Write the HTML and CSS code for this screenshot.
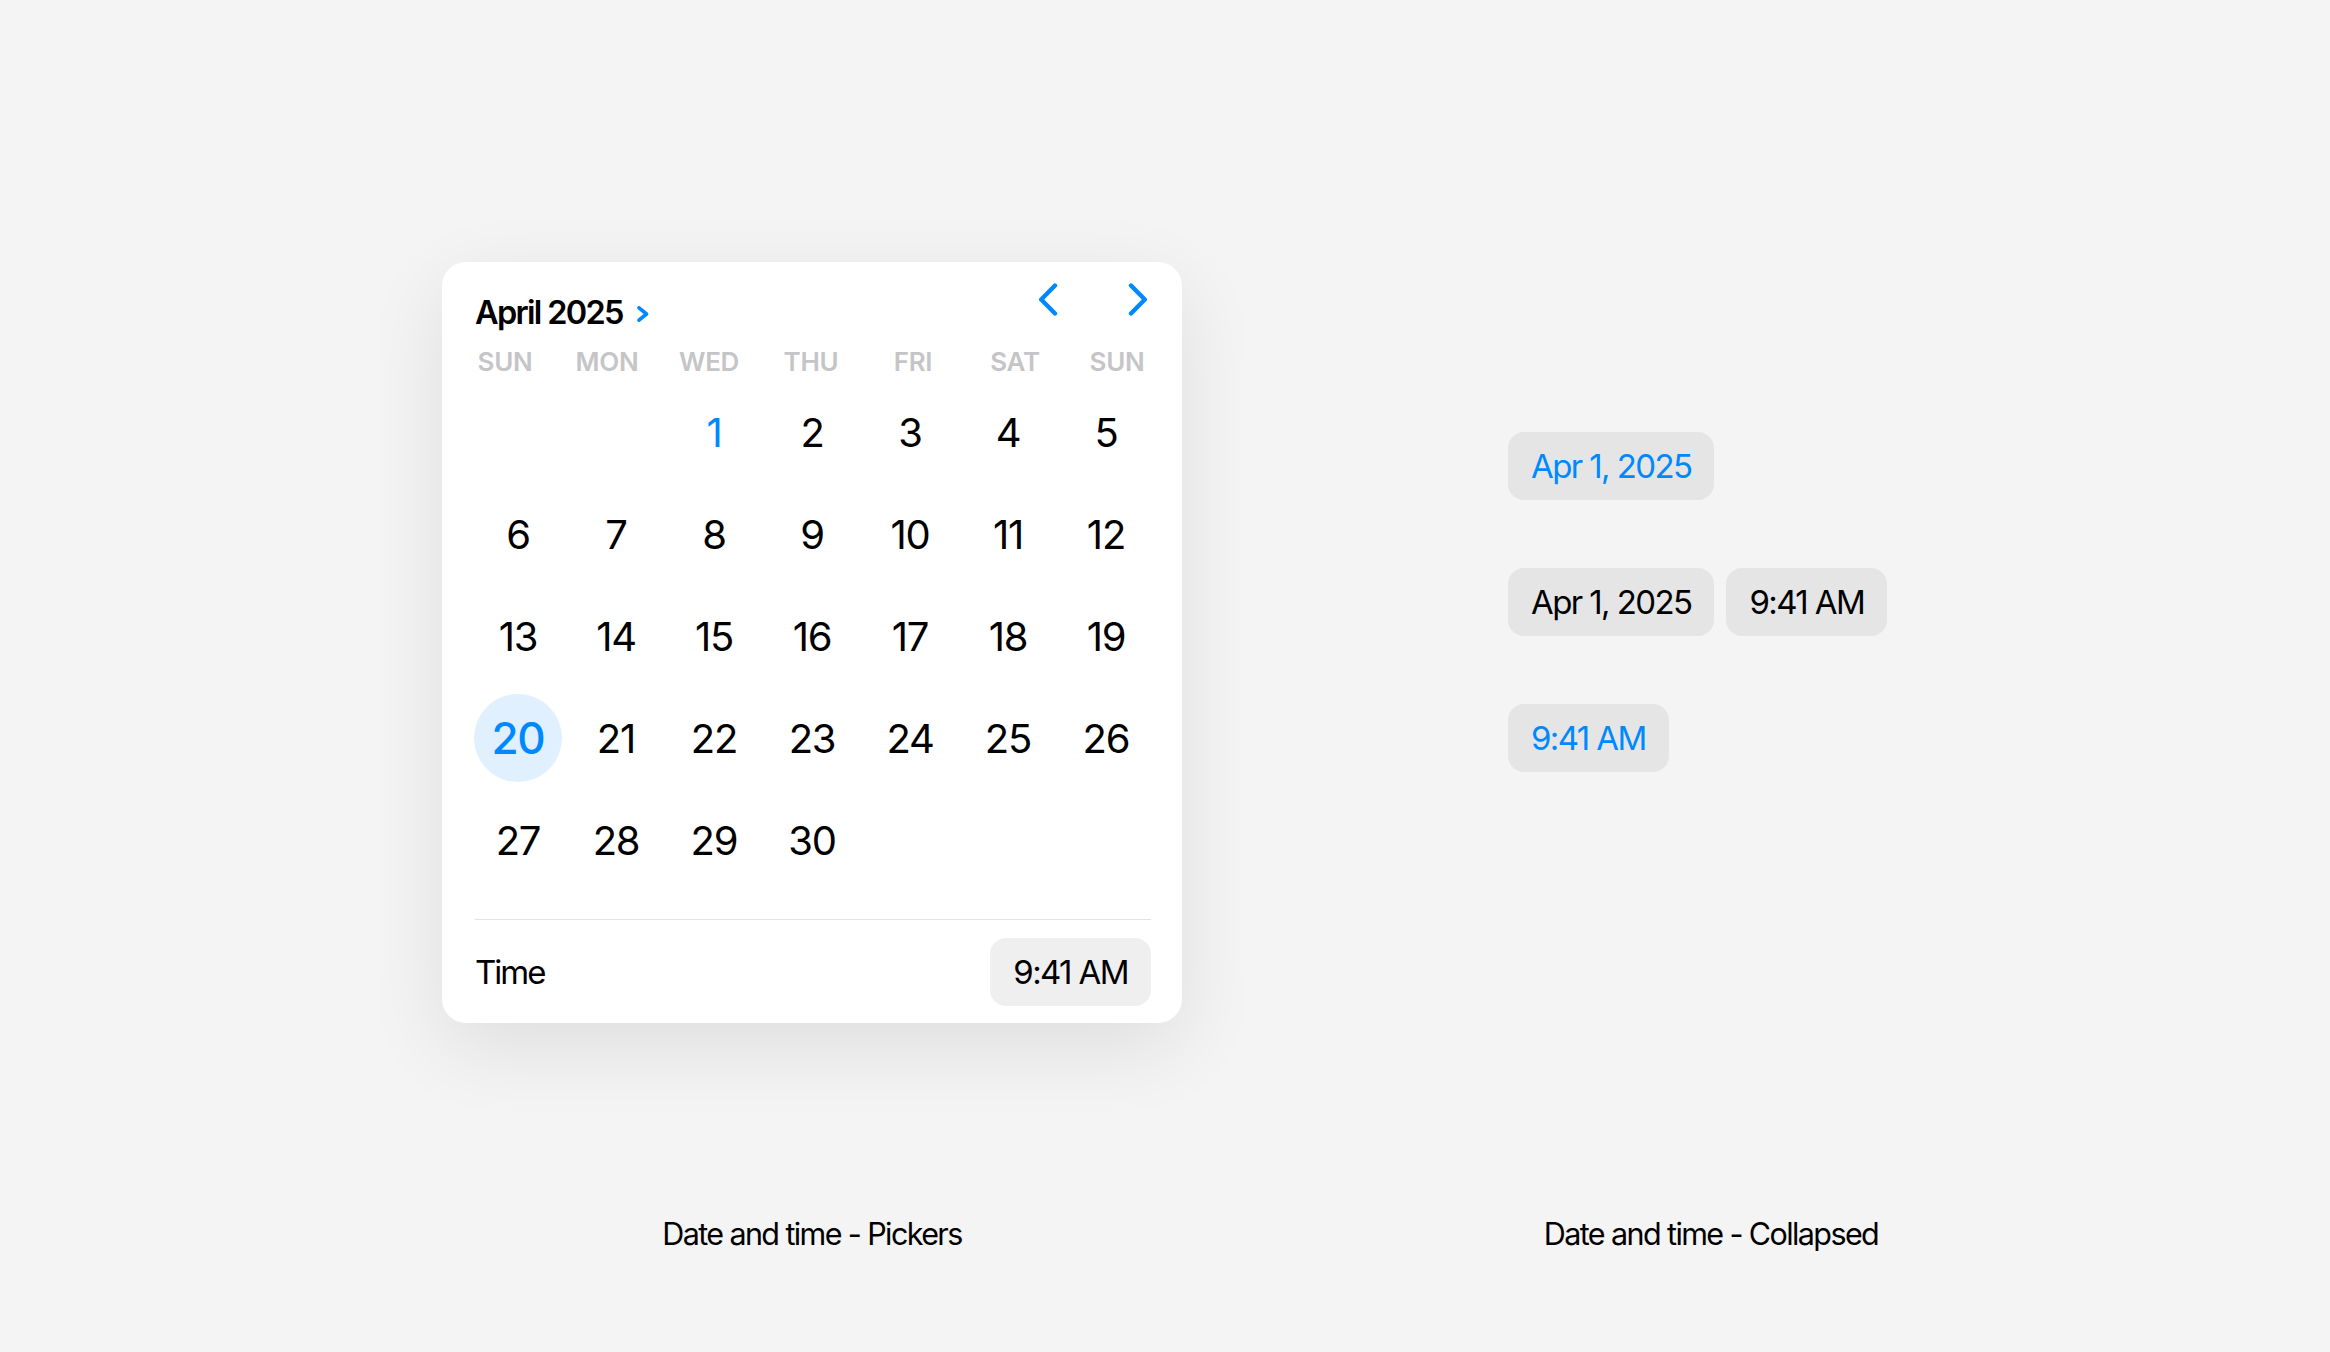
FILE: index.html
```html
<!DOCTYPE html>
<html lang="en">
<head>
<meta charset="utf-8">
<title>Date and time</title>
<link rel="stylesheet" href="styles.css">
</head>
<body>
<main class="stage">
  <section class="col col-pickers">
    <div class="card">
      <div class="cal-head">
        <div class="month">
          <span>April 2025</span>
          <svg class="month-chev" viewBox="0 0 14 16" aria-hidden="true"><path d="M3 1.8 L10.5 8 L3 14.2"/></svg>
        </div>
        <div class="nav">
          <svg viewBox="0 0 20 33" aria-hidden="true"><path d="M17 2.5 L3.2 16.5 L17 30.5"/></svg>
          <svg viewBox="0 0 20 33" aria-hidden="true"><path d="M3 2.5 L16.8 16.5 L3 30.5"/></svg>
        </div>
      </div>
      <div class="weekdays">
        <span>SUN</span><span>MON</span><span>WED</span><span>THU</span><span>FRI</span><span>SAT</span><span>SUN</span>
      </div>
      <div class="days">
        <span class="day"></span><span class="day"></span>
        <span class="day today">1</span><span class="day">2</span><span class="day">3</span><span class="day">4</span><span class="day">5</span>
        <span class="day">6</span><span class="day">7</span><span class="day">8</span><span class="day">9</span><span class="day">10</span><span class="day">11</span><span class="day">12</span>
        <span class="day">13</span><span class="day">14</span><span class="day">15</span><span class="day">16</span><span class="day">17</span><span class="day">18</span><span class="day">19</span>
        <span class="day selected">20</span><span class="day">21</span><span class="day">22</span><span class="day">23</span><span class="day">24</span><span class="day">25</span><span class="day">26</span>
        <span class="day">27</span><span class="day">28</span><span class="day">29</span><span class="day">30</span>
      </div>
      <div class="time-row">
        <span class="time-label">Time</span>
        <span class="pill">9:41 AM</span>
      </div>
    </div>
  </section>
  <section class="col col-collapsed">
    <div class="pill-stack">
      <div class="pill-row"><span class="pill pill-on-bg blue">Apr 1, 2025</span></div>
      <div class="pill-row"><span class="pill pill-on-bg">Apr 1, 2025</span><span class="pill pill-on-bg">9:41 AM</span></div>
      <div class="pill-row"><span class="pill pill-on-bg blue">9:41 AM</span></div>
    </div>
  </section>
  <p class="caption">Date and time - Pickers</p>
  <p class="caption">Date and time - Collapsed</p>
</main>
</body>
</html>
```

FILE: styles.css
```css
html, body {
  margin: 0;
  padding: 0;
}

body {
  background: #f4f4f4;
  font-family: Inter, "Noto Sans", "Liberation Sans", sans-serif;
  color: #000;
}

.stage {
  width: 2330px;
  height: 1352px;
  box-sizing: border-box;
  padding: 262px 0 0 442px;
  display: grid;
  grid-template-columns: 740px 406px;
  column-gap: 326px;
  align-content: start;
}

/* ---------- card ---------- */
.card {
  background: #fff;
  border-radius: 24px;
  box-shadow: 0 24px 80px rgba(0, 0, 0, 0.09);
  padding: 21px 31px 17px 33px;
  height: 761px;
  box-sizing: border-box;
  display: flex;
  flex-direction: column;
}

.cal-head {
  display: flex;
  justify-content: space-between;
  align-items: flex-start;
  height: 50px;
}

.month {
  margin-top: 10px;
  display: flex;
  align-items: center;
  gap: 13px;
  font-size: 32.5px;
  line-height: 40px;
  font-weight: 600;
  letter-spacing: -1.7px;
}

.month-chev {
  width: 14px;
  height: 16px;
  fill: none;
  stroke: #0088ff;
  stroke-width: 3.6;
  stroke-linecap: round;
  stroke-linejoin: round;
  margin-top: 2px;
}

.nav {
  display: flex;
  gap: 70px;
  margin-right: 3px;
}

.nav svg {
  width: 20px;
  height: 33px;
  display: block;
  fill: none;
  stroke: #0088ff;
  stroke-width: 4.4;
  stroke-linecap: round;
  stroke-linejoin: round;
}

.weekdays {
  display: grid;
  grid-template-columns: repeat(7, 102px);
  margin: 13px 0 0 -21px;
  font-size: 26px;
  line-height: 32px;
  font-weight: 600;
  color: #c5c5c7;
  text-align: center;
  letter-spacing: -0.3px;
}

.days {
  display: grid;
  grid-template-columns: repeat(7, 88px);
  column-gap: 10px;
  grid-auto-rows: 88px;
  row-gap: 14px;
  margin: 10px 0 0 -1px;
  font-size: 40px;
  letter-spacing: -1.2px;
}

.day {
  display: flex;
  align-items: center;
  justify-content: center;
}

.day.today {
  color: #0088ff;
}

.day.selected {
  background: #e1f0ff;
  border-radius: 50%;
  color: #0088ff;
  font-size: 44px;
  font-weight: 500;
}

.time-row {
  margin-top: 35px;
  border-top: 1px solid #e3e3e3;
  padding-top: 18px;
  display: flex;
  justify-content: space-between;
  align-items: center;
}

.time-label {
  font-size: 33px;
  letter-spacing: -2px;
}

/* ---------- pills ---------- */
.pill {
  display: inline-flex;
  align-items: center;
  height: 68px;
  padding: 0 23px;
  border-radius: 16px;
  background: #efeff0;
  font-size: 33px;
  letter-spacing: -1.6px;
  box-sizing: border-box;
}

.pill-on-bg {
  background: #e5e5e6;
}

.pill.blue {
  color: #0088ff;
}

.pill-stack {
  padding-top: 170px;
  display: flex;
  flex-direction: column;
  align-items: flex-start;
  gap: 68px;
}

.pill-row {
  display: flex;
  gap: 12px;
}

/* ---------- captions ---------- */
.caption {
  margin: 193px 0 0;
  text-align: center;
  font-size: 30.5px;
  line-height: 36px;
  letter-spacing: -1.6px;
}
```
